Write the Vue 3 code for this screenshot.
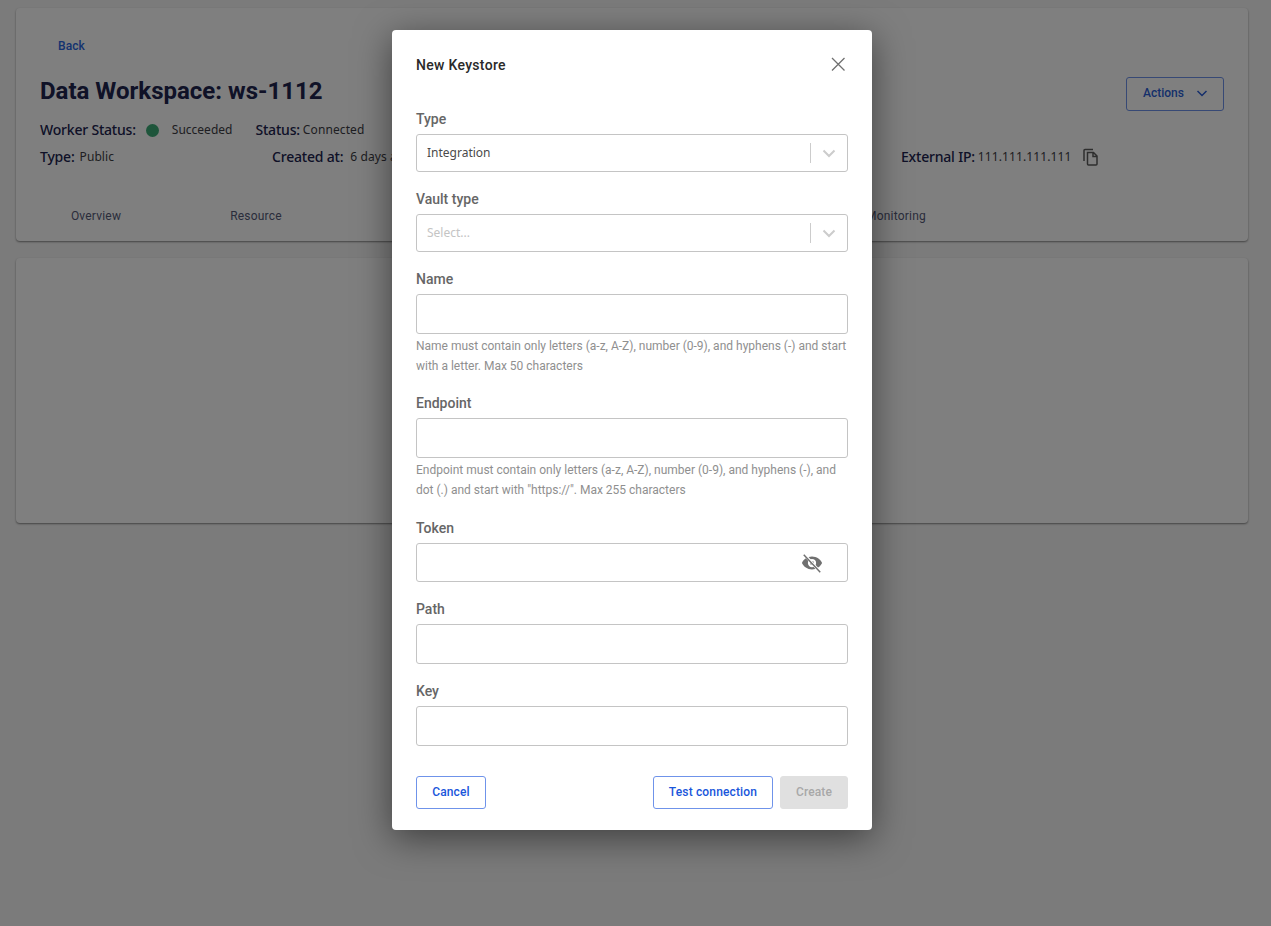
<script setup>
const tabs = ['Overview', 'Resource', '', '', '', 'Monitoring']
</script>

<template>
  <div class="page">
    <section class="card head-card">
      <a class="back">Back</a>
      <div class="title-row">
        <h1>Data Workspace: ws-1112</h1>
        <button class="actions">
          Actions
          <svg width="14" height="14" viewBox="0 0 14 14"><path d="M2.5 5l4.5 4.5L11.500 5" fill="none" stroke="currentColor" stroke-width="1.5"/></svg>
        </button>
      </div>
      <div class="meta first">
        <b>Worker Status:</b><i class="dot"></i><span class="succ">Succeeded</span>
        <b class="status">Status:</b><span class="val">Connected</span>
      </div>
      <div class="meta second">
        <div class="cell type"><b>Type:</b><span class="val">Public</span></div>
        <div class="cell created"><b>Created at:</b><span class="val wide">6 days ago</span></div>
        <div class="cell ip">
          <b>External IP:</b><span class="val">111.111.111.111</span>
          <svg class="copy" width="17" height="18" viewBox="0 0 17 18"><path d="M2 13V2.500A1 1 0 0 1 3 1.500h8M5.500 4.500h6l3.500 3.500v8a1 1 0 0 1-1 1H6.500a1 1 0 0 1-1-1zM11 4.500V8.500h4" fill="none" stroke="currentColor" stroke-width="1.500"/></svg>
        </div>
      </div>
      <nav class="tabs"><span v-for="(t, i) in tabs" :key="i" class="tab">{{ t }}</span></nav>
    </section>
    <section class="card empty-card"></section>

    <div class="overlay">
      <div class="modal">
        <header class="modal-head">
          <h2>New Keystore</h2>
          <svg class="close" width="16" height="16" viewBox="0 0 16 16"><path d="M2 2l12.500 12.500M14.500 2L2 14.500" fill="none" stroke="#707070" stroke-width="1.300"/></svg>
        </header>

        <label class="field">
          <span class="label">Type</span>
          <div class="select">
            <span class="sel-val">Integration</span>
            <i class="sep"></i>
            <svg width="20" height="20" viewBox="0 0 20 20"><path d="M4.500 7.500L10 13l5.500-5.500" fill="none" stroke="#ccc" stroke-width="2"/></svg>
          </div>
        </label>
        <label class="field">
          <span class="label">Vault type</span>
          <div class="select">
            <span class="sel-val ph">Select...</span>
            <i class="sep"></i>
            <svg width="20" height="20" viewBox="0 0 20 20"><path d="M4.500 7.500L10 13l5.500-5.500" fill="none" stroke="#ccc" stroke-width="2"/></svg>
          </div>
        </label>
        <label class="field with-help">
          <span class="label">Name</span>
          <div class="input"></div>
          <p class="help">Name must contain only letters (a-z, A-Z), number (0-9), and hyphens (-) and start with a letter. Max 50 characters</p>
        </label>
        <label class="field with-help endpoint">
          <span class="label">Endpoint</span>
          <div class="input"></div>
          <p class="help">Endpoint must contain only letters (a-z, A-Z), number (0-9), and hyphens (-), and dot (.) and start with "https://". Max 255 characters</p>
        </label>
        <label class="field">
          <span class="label">Token</span>
          <div class="input token">
            <svg width="22" height="22" viewBox="0 0 24 24"><path fill="#707070" d="M12 5C7 5 2.900 8 1 12c1.900 4 6 7 11 7s9.100-3 11-7c-1.900-4-6-7-11-7zm0 11.500a4.500 4.500 0 1 1 0-9 4.500 4.500 0 0 1 0 9z"/><circle cx="12" cy="12" r="2.200" fill="#707070"/><path d="M3.500 2.500l17 19" stroke="#fff" stroke-width="3"/><path d="M3 3l18 19" stroke="#707070" stroke-width="1.600"/></svg>
          </div>
        </label>
        <label class="field">
          <span class="label">Path</span>
          <div class="input"></div>
        </label>
        <label class="field">
          <span class="label">Key</span>
          <div class="input"></div>
        </label>

        <footer class="modal-foot">
          <button class="btn">Cancel</button>
          <div class="right">
            <button class="btn test">Test connection</button>
            <button class="btn create">Create</button>
          </div>
        </footer>
      </div>
    </div>
  </div>
</template>

<style>
html, body { margin: 0; background: #f6f6f6; }
</style>

<style scoped>
.page {
  position: relative;
  min-height: 926px;
  box-sizing: border-box;
  padding: 8px 23px 0 16px;
  font-family: Roboto, sans-serif;
  color: #20234f;
  overflow: hidden;
}
.card {
  background: #fff;
  border-radius: 4px;
  box-shadow: 0 1px 2px rgba(0, 0, 0, .45);
}
.head-card { height: 233px; box-sizing: border-box; padding: 29px 24px 0; }
.empty-card { height: 265px; margin-top: 17px; }
.back { display: block; margin-left: 18px; font-size: 12px; line-height: 18px; font-weight: 500; letter-spacing: .1px; color: #2a66e0; }
.title-row { display: flex; justify-content: space-between; margin-top: 20px; }
h1 { margin: 0; font-size: 24px; line-height: 32px; font-weight: 700; color: #20244f; }
.actions {
  display: flex; align-items: center; justify-content: space-between;
  box-sizing: border-box; width: 98px; height: 34px; margin-top: 2px; padding: 0 14px 2px 16px;
  background: transparent; border: 1px solid #6f93ea; border-radius: 3px;
  font: 500 12px Roboto, sans-serif; color: #2b5fd6;
}
.meta { display: flex; align-items: center; font-family: "Noto Sans", sans-serif; line-height: 20px; }
.first { margin-top: 9px; height: 20px; }
.second { margin-top: 7px; height: 20px; }
b { font-size: 14px; font-weight: 500; color: #20234f; letter-spacing: -.2px; }
.val, .succ { font-size: 12px; color: #3c3c44; letter-spacing: .1px; }
.succ { letter-spacing: 0; }
.dot { width: 13px; height: 13px; margin: 0 13px 0 10px; border-radius: 50%; background: #3cab76; }
.status { margin-left: 23px; }
.first .val, .cell .val { margin-left: 3px; }
.cell { display: flex; align-items: center; }
.type { width: 232px; }
.type .val { margin-left: 5px; }
.created { width: 629px; }
.cell .wide { margin-left: 7px; }
.copy { margin-left: 11px; color: #5c5c5c; }
.tabs { display: flex; margin: 40px 0 0 -24px; }
.tab { width: 160px; text-align: center; font-size: 12px; line-height: 18px; font-weight: 400; color: #555a78; letter-spacing: .2px; }

.overlay {
  position: absolute;
  inset: 0;
  padding-right: 7px;
  background: rgba(0, 0, 0, .5);
  display: flex;
  justify-content: center;
  align-items: flex-start;
}
.modal {
  width: 480px;
  height: 800px;
  margin-top: 30px;
  box-sizing: border-box;
  padding: 0 24px;
  background: #fff;
  border-radius: 4px;
  box-shadow: 0 8px 36px rgba(0, 0, 0, .5);
}
.modal-head { display: flex; align-items: center; justify-content: space-between; height: 69px; margin-bottom: 10px; padding-right: 2px; }
h2 { margin: 0; font-size: 14px; font-weight: 500; letter-spacing: .3px; color: #2a2a2a; }
.close { margin-top: -2px; }
.field { display: block; margin-bottom: 17px; }
.field.with-help { margin-bottom: 18px; }
.label { display: block; height: 20px; margin-bottom: 5px; font-size: 14px; line-height: 20px; font-weight: 500; color: #666; }
.select, .input { box-sizing: border-box; border: 1px solid #c4c4c4; border-radius: 3px; background: #fff; }
.select { display: flex; align-items: center; height: 38px; padding: 0 8px 0 10px; }
.sel-val { flex: 1; padding-bottom: 1px; font: 12px "Noto Sans", sans-serif; color: #4a4a4a; }
.ph { color: #c4c4c4; }
.sep { width: 1px; height: 20px; margin-right: 8px; background: #ccc; }
.input { height: 40px; }
.token { height: 39px; display: flex; align-items: center; justify-content: flex-end; padding-right: 24px; }
.help { margin: 2px 0 -1px; font-size: 12px; line-height: 20px; color: #8f8f8f; }
.endpoint .help { margin: 2px 0 0; }
.modal-foot { display: flex; justify-content: space-between; margin-top: 30px; }
.right { display: flex; gap: 7px; }
.btn {
  box-sizing: border-box; height: 33px; width: 70px; padding: 0 0 2px;
  background: #fff; border: 1px solid #6f93ea; border-radius: 3px;
  font: 500 12px Roboto, sans-serif; letter-spacing: .15px; color: #1a56db;
}
.test { width: 120px; }
.create { width: 68px; background: #e0e0e0; border-color: #e0e0e0; color: #a8a8a8; }
</style>
